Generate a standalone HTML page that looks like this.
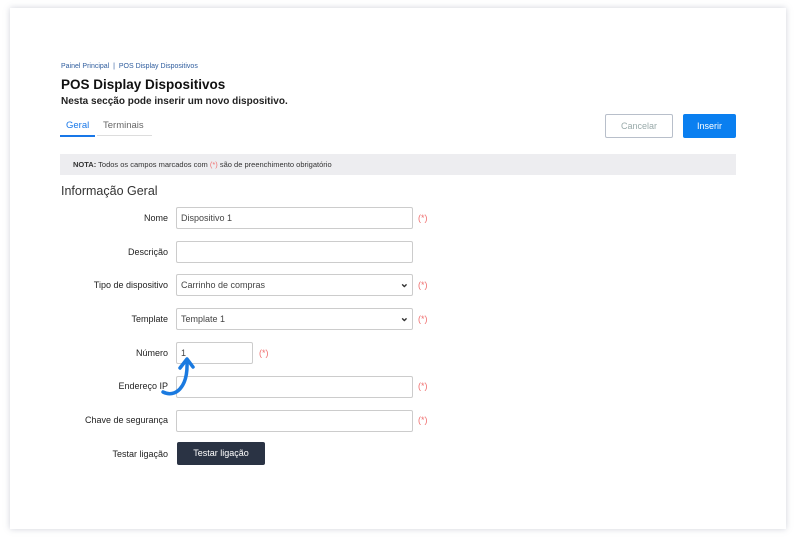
<!DOCTYPE html>
<html><head><style>
body{margin:0;width:800px;height:544px;background:#fff;font-family:"Liberation Sans",sans-serif;position:relative;overflow:hidden}
.card{position:absolute;left:10px;top:8px;width:776px;height:521px;background:#fff;box-shadow:0 0 6px rgba(120,125,150,.35)}
.a{position:absolute;white-space:nowrap}
.lbl{position:absolute;right:632px;font-size:9px;color:#222;text-align:right}
.in{position:absolute;left:176px;width:237px;height:22px;border:1px solid #ccc;border-radius:2px;background:#fff;font-size:9px;color:#444;box-sizing:border-box;padding:5px 4px}
.req{position:absolute;left:418px;font-size:9px;color:#f07070}
.ar{position:absolute;right:3px;top:2px;font-size:11px;font-weight:bold;color:#333}
</style></head><body>
<div class="card"></div>
<div class="a" style="left:61px;top:63px;font-size:7px;color:#2f5d9e">Painel Principal &nbsp;|&nbsp; POS Display Dispositivos</div>
<div class="a" style="left:61px;top:77px;font-size:13.5px;font-weight:bold;color:#111">POS Display Dispositivos</div>
<div class="a" style="left:61px;top:96px;font-size:10px;font-weight:bold;color:#222">Nesta secção pode inserir um novo dispositivo.</div>
<div class="a" style="left:66px;top:120px;font-size:9.5px;color:#1877e8">Geral</div>
<div class="a" style="left:103px;top:120px;font-size:9.5px;color:#666">Terminais</div>
<div class="a" style="left:60px;top:135px;width:35px;height:2px;background:#1877e8"></div>
<div class="a" style="left:97px;top:135px;width:55px;height:1px;background:#ddd"></div>
<div class="a" style="left:605px;top:114px;width:68px;height:24px;border:1px solid #b8bfca;border-radius:2px;box-sizing:border-box;font-size:9px;color:#9aa;text-align:center;line-height:22px">Cancelar</div>
<div class="a" style="left:683px;top:114px;width:53px;height:24px;background:#0a7ff0;border-radius:2px;font-size:9px;color:#fff;text-align:center;line-height:24px">Inserir</div>
<div class="a" style="left:60px;top:154px;width:676px;height:21px;background:#ededf0"></div>
<div class="a" style="left:73px;top:160px;font-size:7.5px;color:#333"><b>NOTA:</b> Todos os campos marcados com <span style="color:#f07070">(*)</span> são de preenchimento obrigatório</div>
<div class="a" style="left:61px;top:184px;font-size:12.5px;color:#333">Informação Geral</div>

<div class="lbl" style="top:213px">Nome</div><div class="in" style="top:207px">Dispositivo 1</div><div class="req" style="top:213px">(*)</div>
<div class="lbl" style="top:247px">Descrição</div><div class="in" style="top:241px"></div>
<div class="lbl" style="top:280px">Tipo de dispositivo</div><div class="in" style="top:274px">Carrinho de compras<span class="ar">⌄</span></div><div class="req" style="top:280px">(*)</div>
<div class="lbl" style="top:314px">Template</div><div class="in" style="top:308px">Template 1<span class="ar">⌄</span></div><div class="req" style="top:314px">(*)</div>
<div class="lbl" style="top:348px">Número</div><div class="in" style="top:342px;width:77px">1</div><div class="req" style="top:348px;left:259px">(*)</div>
<div class="lbl" style="top:381px">Endereço IP</div><div class="in" style="top:376px"></div><div class="req" style="top:381px">(*)</div>
<div class="lbl" style="top:415px">Chave de segurança</div><div class="in" style="top:410px"></div><div class="req" style="top:415px">(*)</div>
<div class="lbl" style="top:449px">Testar ligação</div>
<div class="a" style="left:177px;top:442px;width:88px;height:23px;background:#2a3344;border-radius:2px;color:#fff;font-size:9px;text-align:center;line-height:23px">Testar ligação</div>
<svg class="a" style="left:160px;top:350px" width="40" height="50"><path d="M3 42 C15 48 28 38 27 12" stroke="#1a7ae0" stroke-width="3.5" fill="none" stroke-linecap="round"/><path d="M20 18 L27 9 L33 17" stroke="#1a7ae0" stroke-width="3.5" fill="none" stroke-linecap="round" stroke-linejoin="round"/></svg>
</body></html>
